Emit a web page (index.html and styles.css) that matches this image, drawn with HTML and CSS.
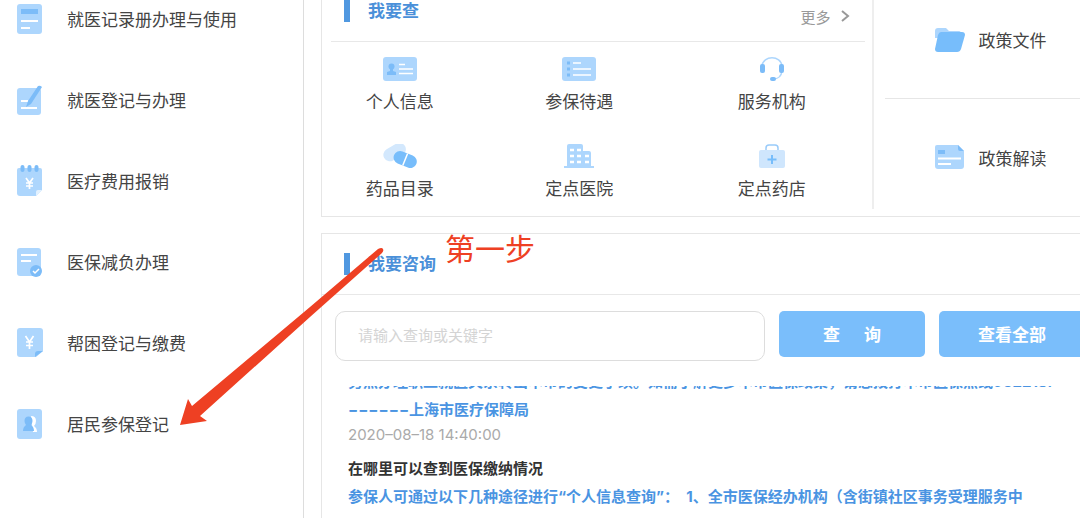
FILE: index.html
```html
<!DOCTYPE html>
<html lang="zh-CN">
<head>
    <meta charset="UTF-8">
    <meta name="viewport" content="width=device-width, initial-scale=1.0">
    <title>医保服务</title>
    <link rel="stylesheet" href="styles.css">
</head>
<body>
    <div class="page">
        <nav class="sidebar">
            <a class="side-item" href="#">
                <svg width="26" height="32" viewBox="0 0 26 32"><rect x="0" y="1" width="25" height="30" rx="3" fill="#add6fd"/><rect x="4" y="6" width="17" height="5" fill="#7cbcf8"/><path d="M4 18h17M4 25h9" stroke="#fff" stroke-width="2"/></svg>
                就医记录册办理与使用
            </a>
            <a class="side-item" href="#">
                <svg width="26" height="32" viewBox="0 0 26 32"><rect x="0" y="4" width="24" height="27" rx="3" fill="#add6fd"/><path d="M4 17h7M4 24h16" stroke="#fff" stroke-width="2"/><path d="M21 2q2-1 4 1L14 20l-5 3 2-6z" fill="#7cbcf8"/></svg>
                就医登记与办理
            </a>
            <a class="side-item" href="#">
                <svg width="26" height="32" viewBox="0 0 26 32"><path d="M2 3h21q2 0 2 2v20l-6 6H3q-3 0-3-3V5q0-2 2-2z" fill="#add6fd"/><path d="M19 31v-4q0-2 2-2h4z" fill="#e3f1fe"/><path d="M5.500 2v3M12.500 2v3M19.500 2v3" stroke="#7cbcf8" stroke-width="4" stroke-linecap="round"/><path d="M9 13l3.500 5L16 13M12.500 18v6M9 18h7M9 21h7" fill="none" stroke="#fff" stroke-width="1.700"/></svg>
                医疗费用报销
            </a>
            <a class="side-item" href="#">
                <svg width="26" height="32" viewBox="0 0 26 32"><rect x="0" y="2" width="24" height="28" rx="3" fill="#add6fd"/><path d="M4 9h16M4 15h10" stroke="#fff" stroke-width="2"/><circle cx="19" cy="25" r="6" fill="#7cbcf8"/><path d="M16 25l2 2 4-4" fill="none" stroke="#fff" stroke-width="1.500"/></svg>
                医保减负办理
            </a>
            <a class="side-item" href="#">
                <svg width="26" height="32" viewBox="0 0 26 32"><path d="M3 1h20q3 0 3 3v20l-7 6H3q-3 0-3-3V4q0-3 3-3z" fill="#add6fd"/><path d="M18 30v-3q0-3 3-3h5z" fill="#7cbcf8"/><path d="M8.500 9l4 6 4-6M12.500 15v7M9 15h7M9 18.500h7" fill="none" stroke="#fff" stroke-width="1.700"/></svg>
                帮困登记与缴费
            </a>
            <a class="side-item" href="#">
                <svg width="26" height="32" viewBox="0 0 26 32"><rect x="0" y="1" width="25" height="30" rx="3" fill="#add6fd"/><path d="M14 8q5 0 5 5 0 3-2 5 3 2 3 6h-4z" fill="#fff"/><path d="M11.500 8.500q4 0 4 4.500 0 2-1.500 4 3 2 3 6H6q0-4 3-6-1.500-2-1.500-4 0-4.500 4-4.500z" fill="#7cbcf8"/></svg>
                居民参保登记
            </a>
        </nav>

        <main class="content">
            <section class="card query">
                <div class="query-left">
                    <div class="card-head query-head">
                        <h2>我要查</h2>
                        <a class="more" href="#">更多 <svg width="9" height="12" viewBox="0 0 9 12"><path d="M1 1l6 5-6 5" fill="none" stroke="#999" stroke-width="2"/></svg></a>
                    </div>
                    <div class="query-grid">
                        <a href="#">
                            <svg width="34" height="24" viewBox="0 0 34 24"><rect width="34" height="24" rx="3" fill="#add6fd"/><circle cx="8.500" cy="9.500" r="3" fill="#7cbcf8"/><path d="M7 11h3v3l3 1v3H4v-3l3-1z" fill="#7cbcf8"/><path d="M16 7.500h6M16 12h14M16 16.500h14" stroke="#fff" stroke-width="1.500"/></svg>
                            个人信息
                        </a>
                        <a href="#">
                            <svg width="34" height="24" viewBox="0 0 34 24"><rect width="34" height="24" rx="3" fill="#add6fd"/><path d="M5 6h3M5 12h3M5 18h3" stroke="#7cbcf8" stroke-width="3"/><path d="M11 6h8M11 12h18M11 18h18" stroke="#fff" stroke-width="1.500"/></svg>
                            参保待遇
                        </a>
                        <a href="#">
                            <svg width="26" height="24" viewBox="0 0 26 24"><path d="M3 9C4-2 22-2 23 9M23 14q-1 8-9 8" fill="none" stroke="#add6fd" stroke-width="1.500"/><rect x="1" y="7" width="5" height="9" rx="2" fill="#7cbcf8"/><rect x="20" y="7" width="5" height="9" rx="2" fill="#7cbcf8"/><rect x="11" y="20" width="6" height="4" rx="2" fill="#7cbcf8"/></svg>
                            服务机构
                        </a>
                        <a href="#">
                            <svg width="34" height="24" viewBox="0 0 34 24"><rect x="0" y="2" width="24" height="13" rx="6.500" fill="#d3e8fd" transform="rotate(-30 11 9)"/><g transform="rotate(22 22 16)"><rect x="10" y="9" width="24" height="13" rx="6.500" fill="#77bdfb"/><path d="M22 9v13" stroke="#fff" stroke-width="1.500"/></g></svg>
                            药品目录
                        </a>
                        <a href="#">
                            <svg width="30" height="24" viewBox="0 0 30 24"><path d="M3 22V2q0-2 2-2h12q2 0 2 2v5h6q2 0 2 2v13h3v2H0v-2z" fill="#add6fd"/><path d="M6 6h4M13 6h4M6 12h4M13 12h4M21 12h4M6 18h4M13 18h4M21 18h4" stroke="#fff" stroke-width="2.500"/></svg>
                            定点医院
                        </a>
                        <a href="#">
                            <svg width="26" height="24" viewBox="0 0 26 24"><path d="M7 7V4q0-3 3-3h6q3 0 3 3v3" fill="none" stroke="#99cbfa" stroke-width="1.500"/><rect y="6" width="26" height="18" rx="2" fill="#cfe6fd"/><path d="M13 11v9M8.500 15.500h9" stroke="#77bdfb" stroke-width="2"/></svg>
                            定点药店
                        </a>
                    </div>
                </div>
                <div class="policy">
                    <a href="#">
                        <svg width="30" height="24" viewBox="0 0 30 24"><path d="M0 3q0-3 3-3h8l3 3h10q2 0 2 3v4H0z" fill="#add6fd"/><path d="M6 4h21q3 0 3 3l-4 14q-1 3-4 3H3q-3 0-3-3L3 7q1-3 3-3z" fill="#77bdfb"/></svg>
                        政策文件
                    </a>
                    <a href="#">
                        <svg width="30" height="24" viewBox="0 0 30 24"><path d="M2 0h21l6 6v15q0 3-3 3H3q-3 0-3-3V2q0-2 2-2z" fill="#add6fd"/><path d="M23 0l6 6h-4q-2 0-2-2zM3 5h7v4H3z" fill="#7cbcf8"/><path d="M3 13.500h23M3 19h13" stroke="#fff" stroke-width="2"/></svg>
                        政策解读
                    </a>
                </div>
            </section>

            <section class="card consult">
                <div class="card-head">
                    <h2>我要咨询</h2>
                </div>
                <form class="search">
                    <input type="text" placeholder="请输入查询或关键字" aria-label="请输入查询或关键字">
                    <button type="button" class="btn-search"><span>查</span><span>询</span></button>
                    <button type="button">查看全部</button>
                </form>
                <div class="answers">
                    <div class="answer-list">
                        <p>务然办理职工就医关系转出本市的变更手续。如需了解更多本市医保政策，请您拨打本市医保热线962218.</p>
                        <p>−−−−−−上海市医疗保障局</p>
                        <time>2020–08–18 14:40:00</time>
                        <h3>在哪里可以查到医保缴纳情况</h3>
                        <p>参保人可通过以下几种途径进行“个人信息查询”：&nbsp; 1、全市医保经办机构（含街镇社区事务受理服务中</p>
                    </div>
                </div>
            </section>
        </main>
    </div>

    <!-- Marks over the page -->
    <svg class="arrow" width="210" height="182" viewBox="0 0 210 182"><path d="M2 181L10 155l4 7L132 63 200 5q4-2 5 0 1 2-1 4L132 73 22 172l7 5z" fill="#ee4023"/></svg>
    <div class="step">第一步</div>
</body>
</html>
```
FILE: styles.css
```css
* {
    box-sizing: border-box;
}
body {
    margin: 0;
    font-family: Inter, "Noto Sans CJK SC", sans-serif;
    font-size: 17px;
    color: #444;
    background: #fff;
    overflow: hidden;
    position: relative;
}
a {
    color: inherit;
    text-decoration: none;
}
h2, h3, p {
    margin: 0;
}
svg {
    display: block;
    flex-shrink: 0;
}

/* The page is scrolled down a little */
.page {
    display: flex;
    height: calc(100vh + 20px);
    margin-top: -20px;
    overflow: hidden;
}

/* Left menu */
.sidebar {
    flex: 0 0 304px;
    border-right: 1px solid #ddd;
}
.side-item {
    display: flex;
    align-items: center;
    gap: 24px;
    height: 81px;
    padding-left: 17px;
}
.side-item:first-child {
    margin-top: -2px;
}

/* Main column runs past the right edge */
.content {
    flex: 1;
    min-width: 0;
    margin-left: 17px;
    margin-right: -20px;
}
.card {
    border: 1px solid #e6e6e6;
    margin-bottom: 16px;
}
.card-head {
    display: flex;
    align-items: center;
    justify-content: space-between;
    height: 61px;
    padding-left: 22px;
    border-bottom: 1px solid #e8e8e8;
}
.card-head h2 {
    display: flex;
    align-items: center;
    gap: 18px;
    font-size: 17px;
    line-height: 22px;
    color: #4a90d9;
}
.card-head h2::before {
    content: "";
    width: 6px;
    height: 22px;
    background: #5098e0;
}

/* Query card */
.query {
    display: flex;
    height: 237px;
}
.query-left {
    flex: 555;
    padding: 0 7px 0 9px;
    border-right: 2px solid #eee;
    margin-bottom: 7px;
}
.query-head {
    padding-left: 13px;
}
.more {
    display: flex;
    align-items: center;
    gap: 10px;
    padding-top: 10px;
    margin-right: 15px;
    font-size: 15px;
    color: #999;
}
.query-grid {
    display: grid;
    grid-template-columns: 138fr 222fr 164fr;
    row-gap: 14px;
    margin-top: 15px;
    padding-right: 11px;
}
.query-grid a {
    display: flex;
    flex-direction: column;
    align-items: center;
    gap: 8px;
    height: 73px;
    line-height: 27px;
}
.policy {
    flex: 223;
    padding-left: 11px;
}
.policy a {
    display: flex;
    align-items: center;
    gap: 14px;
    height: 117px;
    padding-left: 50px;
}
.policy a + a {
    border-top: 1px solid #e6e6e6;
}

/* Consult card */
.search {
    display: flex;
    align-items: flex-start;
    gap: 14px;
    padding: 16px 14px 0 13px;
}
.search input {
    flex: 1;
    min-width: 0;
    height: 50px;
    padding: 0 22px 2px;
    border: 1px solid #ddd;
    border-radius: 10px;
    font: inherit;
    font-size: 15px;
}
.search input::placeholder {
    color: #d4d4d4;
}
.search button {
    flex: 0 0 146px;
    height: 46px;
    padding: 0 0 2px;
    border: none;
    border-radius: 5px;
    background: #7abefb;
    color: #fff;
    font: inherit;
    font-weight: bold;
}
.search .btn-search {
    display: flex;
    align-items: center;
    justify-content: center;
    gap: 24px;
}
.answers {
    height: 160px;
    margin: 25px 26px 0;
    overflow: hidden;
}
.answer-list {
    margin-top: -18px;
    font-size: 15px;
    line-height: 28px;
    white-space: nowrap;
}
.answer-list p {
    font-weight: bold;
    color: #4a94e2;
}
.answer-list time {
    display: block;
    line-height: 22px;
    color: #aaa;
}
.answer-list h3 {
    margin-top: 9px;
    font-size: 15px;
    color: #333;
}

/* Hand-made marks over the page */
.arrow {
    position: absolute;
    left: 178px;
    top: 244px;
}
.step {
    position: absolute;
    left: 445px;
    top: 229px;
    font-size: 30px;
    line-height: 40px;
    color: #ee4023;
}
```
